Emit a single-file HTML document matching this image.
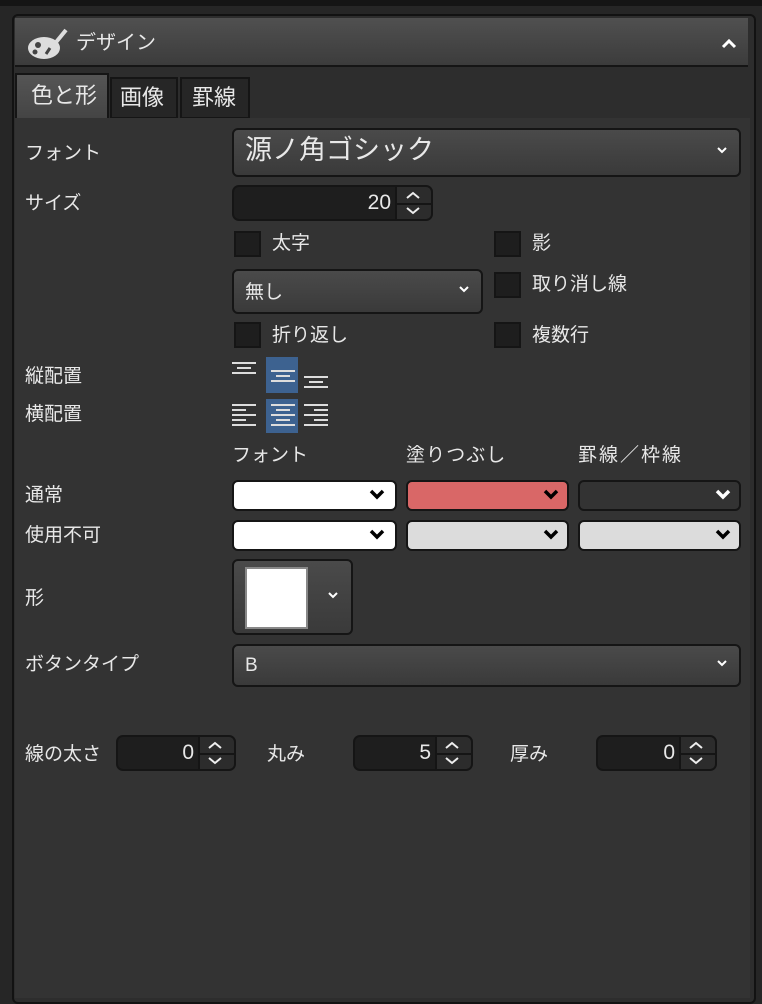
<!DOCTYPE html>
<html><head><meta charset="utf-8"><style>
*{margin:0;padding:0;box-sizing:border-box}
body{width:762px;height:996px;background:#262626;position:relative;overflow:hidden;font-family:"Liberation Sans","Noto Sans CJK JP",sans-serif;color:#e8e8e8}
.a{position:absolute}
.t{position:absolute;font-size:19px;line-height:22px;white-space:nowrap}
.dd{position:absolute;border:2px solid #151515;border-radius:6px;background:linear-gradient(#4a4a4a,#3a3a3a)}
.spin{position:absolute;border:2px solid #151515;border-radius:7px;background:#1e1e1e}
.spin .v{position:absolute;right:40px;top:0;bottom:0;display:flex;align-items:center;font-size:21px}
.spin .b{position:absolute;right:0;top:0;width:36px;bottom:0;background:#2c2c2c;border-left:2px solid #151515;border-radius:0 5px 5px 0}
.spin .b i{position:absolute;left:0;right:0;top:50%;height:2px;background:#151515}
.cb{position:absolute;width:27px;height:26px;background:#1e1e1e;border:2px solid #151515}
.cd{position:absolute;height:31px;border:2px solid #151515;border-radius:6px}
</style></head><body>
<div class="a" style="left:0;top:0;width:762px;height:6px;background:#151515"></div>
<div class="a" style="left:12px;top:14px;width:744px;height:990px;border:2px solid #121212;border-radius:6px;background:#2d2d2d"></div>
<div class="a" style="left:15px;top:18px;width:733px;height:49px;background:linear-gradient(#505050,#3c3c3c);border-bottom:2px solid #151515"></div>
<svg class="a" style="left:26px;top:26px" width="44" height="36" viewBox="0 0 44 36"><ellipse cx="18" cy="22" rx="16" ry="11" fill="#ddd"/><circle cx="12" cy="19" r="3" fill="#444"/><circle cx="9" cy="26" r="2.5" fill="#444"/><path d="M22 26 L40 4" stroke="#ddd" stroke-width="4"/><path d="M20 28 L24 22" stroke="#444" stroke-width="3"/></svg>
<div class="t" style="left:76px;top:32px;font-size:20px">デザイン</div>
<svg class="a" style="left:720px;top:36px" width="18" height="14"><path d="M3 11 L9 5 L15 11" stroke="#fff" stroke-width="3" fill="none"/></svg>
<div class="a" style="left:15px;top:73px;width:94px;height:46px;background:linear-gradient(#555,#444);border:2px solid #151515;border-bottom:none"></div>
<div class="t" style="left:31px;top:85px;font-size:22px">色と形</div>
<div class="a" style="left:110px;top:77px;width:68px;height:42px;background:#262626;border:2px solid #151515"></div>
<div class="t" style="left:120px;top:87px;font-size:22px">画像</div>
<div class="a" style="left:180px;top:77px;width:70px;height:42px;background:#262626;border:2px solid #151515"></div>
<div class="t" style="left:192px;top:87px;font-size:22px">罫線</div>
<div class="a" style="left:15px;top:118px;width:735px;height:880px;background:#333"></div>

<div class="t" style="left:25px;top:143px">フォント</div>
<div class="dd" style="left:232px;top:128px;width:509px;height:49px"></div>
<div class="t" style="left:245px;top:135px;font-size:27px;line-height:30px">源ノ角ゴシック</div>
<svg class="a" style="left:716px;top:145px" width="12" height="10"><path d="M2 3 L6 7 L10 3" stroke="#fff" stroke-width="2" fill="none"/></svg>

<div class="t" style="left:25px;top:193px">サイズ</div>
<div class="spin" style="left:232px;top:185px;width:201px;height:36px"><div class="v">20</div><div class="b"><i></i></div></div>
<svg class="a" style="left:402px;top:188px" width="22" height="30"><path d="M5 10 L11 5 L17 10 M5 20 L11 25 L17 20" stroke="#eee" stroke-width="2" fill="none"/></svg>

<div class="cb" style="left:234px;top:231px"></div><div class="t" style="left:272px;top:233px">太字</div>
<div class="cb" style="left:494px;top:231px"></div><div class="t" style="left:532px;top:233px">影</div>
<div class="dd" style="left:232px;top:269px;width:251px;height:45px"></div>
<div class="t" style="left:245px;top:282px">無し</div>
<svg class="a" style="left:458px;top:284px" width="12" height="10"><path d="M2 3 L6 7 L10 3" stroke="#fff" stroke-width="2" fill="none"/></svg>
<div class="cb" style="left:494px;top:272px"></div><div class="t" style="left:532px;top:274px">取り消し線</div>
<div class="cb" style="left:234px;top:322px"></div><div class="t" style="left:272px;top:325px">折り返し</div>
<div class="cb" style="left:494px;top:322px"></div><div class="t" style="left:532px;top:325px">複数行</div>

<div class="t" style="left:25px;top:366px">縦配置</div>
<div class="t" style="left:25px;top:404px">横配置</div>
<svg class="a" style="left:228px;top:355px" width="110" height="80">
<g stroke="#ddd" stroke-width="2">
<path d="M4 8h24M9 13h14M4 18h24"/>
<rect x="38" y="2" width="32" height="36" fill="#3d6290" stroke="none"/>
<path d="M43 16h24M48 21h14M43 26h24"/>
<path d="M76 22h24M81 27h14M76 32h24"/>
<rect x="38" y="44" width="32" height="34" fill="#3d6290" stroke="none"/>
<path d="M4 50h24M4 55h14M4 60h24M4 65h14M4 70h24"/>
<path d="M43 50h24M48 55h14M43 60h24M48 65h14M43 70h24"/>
<path d="M76 50h24M86 55h14M76 60h24M86 65h14M76 70h24"/>
</g></svg>

<div class="t" style="left:232px;top:445px">フォント</div>
<div class="t" style="left:406px;top:445px;letter-spacing:1px">塗りつぶし</div>
<div class="t" style="left:578px;top:445px;letter-spacing:2px">罫線／枠線</div>

<div class="t" style="left:25px;top:485px">通常</div>
<div class="t" style="left:25px;top:525px">使用不可</div>
<div class="cd" style="left:232px;top:480px;width:165px;background:#fff"></div>
<div class="cd" style="left:406px;top:480px;width:163px;background:#d96767"></div>
<div class="cd" style="left:578px;top:480px;width:163px;background:#333"></div>
<div class="cd" style="left:232px;top:520px;width:165px;background:#fff"></div>
<div class="cd" style="left:406px;top:520px;width:163px;background:#dcdcdc"></div>
<div class="cd" style="left:578px;top:520px;width:163px;background:#dcdcdc"></div>
<svg class="a" style="left:0;top:0" width="762" height="560">
<g stroke="#000" stroke-width="3.5" fill="none">
<path d="M371 491l6 6 6-6M545 491l6 6 6-6M371 531l6 6 6-6M545 531l6 6 6-6M717 531l6 6 6-6"/>
</g>
<path d="M717 491l6 6 6-6" stroke="#fff" stroke-width="3.5" fill="none"/>
</svg>

<div class="t" style="left:25px;top:588px">形</div>
<div class="dd" style="left:232px;top:559px;width:121px;height:76px"></div>
<div class="a" style="left:245px;top:567px;width:63px;height:62px;background:#fff;border:2px solid #888"></div>
<svg class="a" style="left:327px;top:590px" width="12" height="10"><path d="M2 3 L6 7 L10 3" stroke="#fff" stroke-width="2" fill="none"/></svg>

<div class="t" style="left:25px;top:654px">ボタンタイプ</div>
<div class="dd" style="left:232px;top:644px;width:509px;height:43px"></div>
<div class="t" style="left:245px;top:655px">B</div>
<svg class="a" style="left:716px;top:658px" width="12" height="10"><path d="M2 3 L6 7 L10 3" stroke="#fff" stroke-width="2" fill="none"/></svg>

<div class="t" style="left:25px;top:744px">線の太さ</div>
<div class="t" style="left:267px;top:744px">丸み</div>
<div class="t" style="left:510px;top:744px">厚み</div>
<div class="spin" style="left:116px;top:735px;width:120px;height:36px"><div class="v">0</div><div class="b"><i></i></div></div>
<div class="spin" style="left:353px;top:735px;width:120px;height:36px"><div class="v">5</div><div class="b"><i></i></div></div>
<div class="spin" style="left:596px;top:735px;width:121px;height:36px"><div class="v">0</div><div class="b"><i></i></div></div>
<svg class="a" style="left:0;top:735px" width="762" height="36">
<g stroke="#eee" stroke-width="2" fill="none">
<path d="M209 13l6-5 6 5M209 23l6 5 6-5"/>
<path d="M446 13l6-5 6 5M446 23l6 5 6-5"/>
<path d="M690 13l6-5 6 5M690 23l6 5 6-5"/>
</g></svg>
</body></html>
